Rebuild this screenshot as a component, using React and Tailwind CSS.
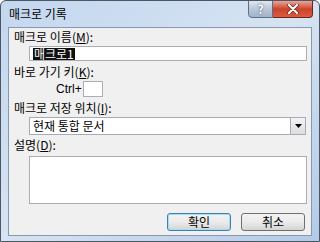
import React from 'react';

const font = { fontFamily: '"Noto Sans CJK KR", "Noto Sans", sans-serif' };

const Label = ({ children, className = '' }) => (
  <div className={`h-[14px] text-[12px] leading-[14px] text-black ${className}`}>{children}</div>
);

const DialogButton = ({ children, primary }) => (
  <button
    className={`w-[64px] h-[18px] rounded-[3px] text-[12px] leading-[14px] text-black bg-gradient-to-b from-[#f2f2f2] via-[#ebebeb] to-[#d4d4d4] ${
      primary ? 'border border-[#3c7fb1] shadow-[inset_0_0_0_1px_#a6dcf5]' : 'border border-[#707070]'
    }`}
  >
    {children}
  </button>
);

export default function App() {
  return (
    <div
      style={font}
      className="w-[320px] h-[242px] flex flex-col border border-[#4c5665] rounded-t-[6px] bg-gradient-to-br from-[#c3d7ef] via-[#d6e3f2] to-[#b3cae7] px-[7px] pb-[5px] overflow-hidden"
    >
      {/* Title bar */}
      <div className="relative h-[26px] flex items-start">
        <div className="pt-[6px] pl-[1px] text-[12px] leading-[14px] text-black">매크로 기록</div>
        <div className="absolute right-[-1px] top-[-1px] flex">
          <div className="w-[25px] h-[18px] rounded-bl-[4px] border border-[#5d6f88] bg-gradient-to-b from-[#dfe7f1] via-[#b9c7d9] to-[#a2b4ca] flex items-center justify-center text-white text-[12px] font-bold leading-none [text-shadow:0_0_2px_#2b3f58]">
            ?
          </div>
          <div className="w-[40px] h-[18px] rounded-br-[4px] border border-l-0 border-[#6e2418] bg-gradient-to-b from-[#eaa596] via-[#c9432c] to-[#de5b3e] flex items-center justify-center">
            <svg width="12" height="10" viewBox="0 0 12 10">
              <path d="M2 1 L10 9 M10 1 L2 9" stroke="#5a1a10" strokeWidth="3.4" strokeLinecap="round" />
              <path d="M2 1 L10 9 M10 1 L2 9" stroke="#ffffff" strokeWidth="2.2" strokeLinecap="round" />
            </svg>
          </div>
        </div>
      </div>

      {/* Client area */}
      <div className="flex-1 bg-[#f0f0f0] border border-[#8898b0] flex flex-col pl-[5px] pr-[4px]">
        <Label className="mt-[2px]">
          매크로 이름(<span className="underline">M</span>):
        </Label>
        <div className="ml-[15px] mt-[2px] h-[15px] bg-white border border-[#abadb3] flex items-center pl-[3px]">
          <span className="bg-[#111111] text-white text-[12px] leading-[12px] px-[1px]">매크로1</span>
        </div>

        <Label className="mt-[4px]">
          바로 가기 키(<span className="underline">K</span>):
        </Label>
        <div className="mt-[2px] flex items-center h-[16px]">
          <span className="ml-[42px] text-[12px] leading-[14px] font-['Liberation_Sans',sans-serif]">Ctrl+</span>
          <div className="ml-[1px] w-[20px] h-[16px] bg-white border border-[#abadb3]" />
        </div>

        <Label className="mt-[4px]">
          매크로 저장 위치(<span className="underline">I</span>):
        </Label>
        <div className="ml-[15px] mr-[1px] mt-[2px] h-[18px] bg-white border border-[#a5acb5] flex items-center">
          <span className="flex-1 pl-[3px] text-[12px] leading-[14px]">현재 통합 문서</span>
          <div className="w-[15px] h-[16px] border-l border-[#a5acb5] bg-gradient-to-b from-[#f3f3f3] to-[#dcdcdc] flex items-center justify-center">
            <svg width="7" height="4" viewBox="0 0 7 4">
              <path d="M0 0 H7 L3.5 4 Z" fill="#000" />
            </svg>
          </div>
        </div>

        <Label className="mt-[3px]">
          설명(<span className="underline">D</span>):
        </Label>
        <div className="ml-[15px] mt-[4px] h-[48px] bg-white border border-[#abadb3]" />

        <div className="mt-[9px] flex justify-end gap-[10px] mr-[2px]">
          <DialogButton primary>확인</DialogButton>
          <DialogButton>취소</DialogButton>
        </div>
      </div>
    </div>
  );
}
